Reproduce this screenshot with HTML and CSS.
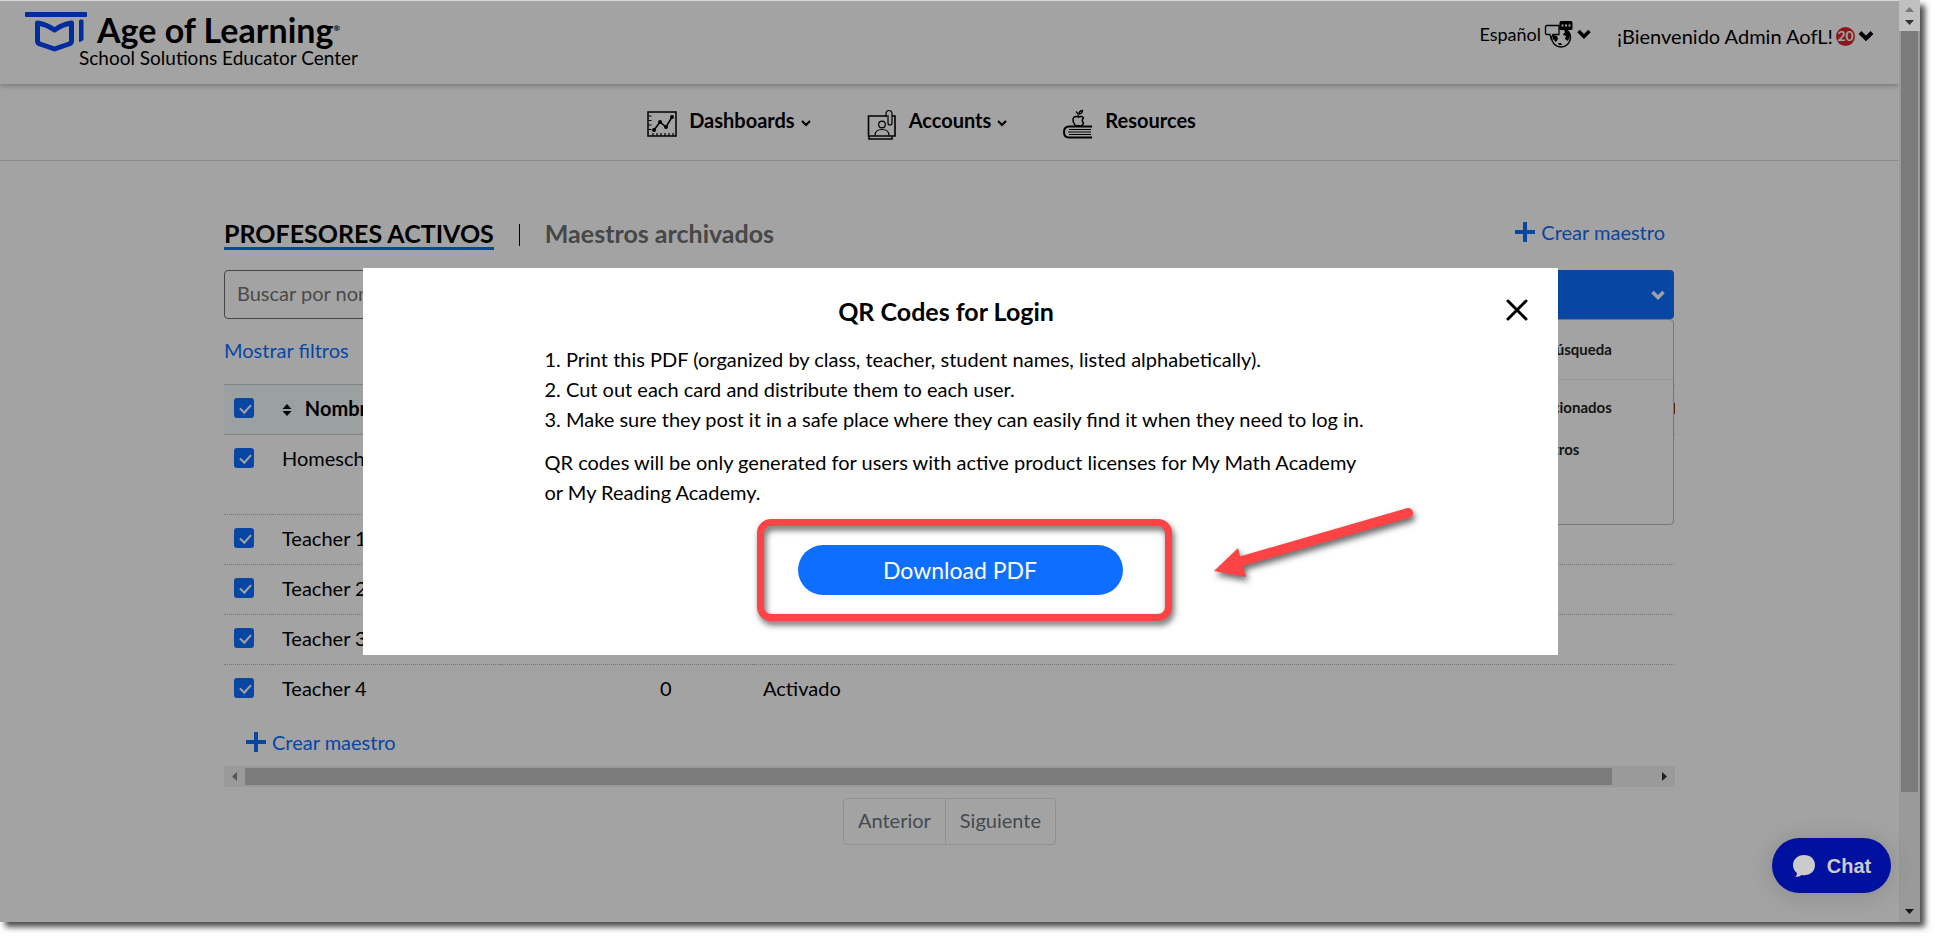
FILE: index.html
```html
<!DOCTYPE html>
<html lang="es">

<head>
  <meta charset="UTF-8">
  <meta name="viewport" content="width=device-width, initial-scale=1.0">
  <title>Age of Learning - School Solutions Educator Center</title>
  <link rel="stylesheet" href="styles.css">
</head>

<body>
  <div class="window">
    <div class="page">
      <header class="header">
        <a class="logo" href="#">
          <svg class="logo-icon" width="62" height="40" viewBox="0 0 62 40">
            <rect x="0" y="0" width="62" height="5" rx="1" fill="#0045fa" />
            <path d="M12.5 11 Q22 12.500 29.500 18 Q37 12.500 46.500 11 V29 Q46.500 31 44 32 L29.500 37 L15 32 Q12.500 31 12.500 29 Z" fill="none" stroke="#0045fa" stroke-width="5" stroke-linejoin="round" />
            <path d="M54 9 q0-1.500 1.500-1.500 h1.500 q1.500 0 1.500 1.500 V27 q0 2-4.500 3 Z" fill="#0045fa" />
          </svg>
          <span class="logo-text">
            <span class="logo-name">Age of Learning<sup>®</sup></span>
            <span class="logo-sub">School Solutions Educator Center</span>
          </span>
        </a>
        <div class="header-right">
          <button class="language">
            Español
            <svg width="30" height="28" viewBox="0 0 30 28">
              <circle cx="17" cy="17.500" r="9.500" fill="none" stroke="#000" stroke-width="1.500" />
              <path d="M9 15 l4 1 1 3 -2 3 -3-3z M20 13 l5-2 1 5 -2 5 -3-2 1-3 -3-1z M14 23 l3 0 1 2 -3 0z" fill="#000" />
              <path d="M3 5.500 h12 v9 h-6 l-2 4 -1-4 h-3 q-1.500 0-1.500-1.500 v-6 q0-1.500 1.500-1.500z" fill="#fff" stroke="#000" stroke-width="1.300" />
              <path d="M17 1 h10 q1.500 0 1.500 1.500 v6 q0 1.500-1.500 1.500 h-3 l-2 4 -2-4 h-3 q-1.500 0-1.500-1.500 v-6 q0-1.500 1.500-1.500z" fill="#000" />
              <path d="M17.500 5.500 h2 m1.500 0 h2 m1.500 0 h2" stroke="#fff" stroke-width="2" />
            </svg>
            <svg width="14" height="10" viewBox="0 0 14 10"><path d="M1.500 2 L7 7.500 L12.500 2" fill="none" stroke="#000" stroke-width="3.500" /></svg>
          </button>
          <button class="account">
            ¡Bienvenido Admin AofL!
            <span class="badge">20</span>
            <svg width="16" height="12" viewBox="0 0 16 12"><path d="M2 2.500 L8 8.500 L14 2.500" fill="none" stroke="#000" stroke-width="4" /></svg>
          </button>
        </div>
      </header>

      <nav class="nav">
        <a class="nav-item" href="#">
          <svg class="nav-icon" width="30" height="32" viewBox="0 0 30 32" fill="none" stroke="#000">
            <rect x="1" y="4" width="28" height="24" stroke-width="1.500" />
            <path d="M1.500 8h3M1.500 12.500h3M1.500 17h3M1.500 21.500h3M6 28v-3M10 28v-3M14 28v-3M18 28v-3M22 28v-3M26 28v-3" stroke-width="1.200" />
            <path d="M7 22 L13 14 L19 19 L25 9" stroke-width="1.500" />
            <g fill="#000" stroke="none"><circle cx="7" cy="22" r="2" /><circle cx="13" cy="14" r="2" /><circle cx="19" cy="19" r="2" /><circle cx="25" cy="9" r="2" /></g>
          </svg>
          Dashboards
          <svg class="caret" width="10" height="8" viewBox="0 0 10 8"><path d="M1 2 L5 6 L9 2" fill="none" stroke="#000" stroke-width="2.200" /></svg>
        </a>
        <a class="nav-item" href="#">
          <svg class="nav-icon" width="30" height="32" viewBox="0 0 30 32" fill="none" stroke="#000">
            <path d="M20 8 H1.500 V28 H28 V8 H25" stroke-width="1.600" />
            <path d="M2 28 v3 h23 v-2.500" stroke-width="1.500" />
            <circle cx="15" cy="16.500" r="3.300" stroke-width="1.200" />
            <path d="M8 27.500 q0-6 7-6 t7 6" stroke-width="1.200" />
            <path d="M19 9 V6 q0-3.500 3-3.500 t3 3.500 V15 q0 2-2 2 t-2-2 V7" stroke-width="1.200" />
          </svg>
          Accounts
          <svg class="caret" width="10" height="8" viewBox="0 0 10 8"><path d="M1 2 L5 6 L9 2" fill="none" stroke="#000" stroke-width="2.200" /></svg>
        </a>
        <a class="nav-item" href="#">
          <svg class="nav-icon" width="30" height="32" viewBox="0 0 30 32" fill="none" stroke="#000">
            <path d="M29 18.500 H6 q-5 0-5 5.500 t5 5.500 H29" stroke-width="2" />
            <path d="M6 21.500H28M5 24H28M6 26.500H28" stroke-width="1" />
            <path d="M12 17 q-2.500-3-2-6 q1-3.500 5.500-2 q4-1.500 5 1 q-2.500 2.500 0 5 q-1 3-3 3 l-2-.5 -2 .5z" stroke-width="1.500" />
            <path d="M15.500 8.500 q0-3-2.500-5 M16 6 q0-3 3.500-3.500 q0 3-3.500 3.500" stroke-width="1.300" />
          </svg>
          Resources
        </a>
      </nav>

      <main class="content">
        <div class="tabs">
          <a class="tab active" href="#">PROFESORES ACTIVOS</a>
          <span class="separator"></span>
          <a class="tab" href="#">Maestros archivados</a>
          <a class="create" href="#">
            <svg width="20" height="20" viewBox="0 0 20 20"><path d="M10 0V20M0 10H20" stroke="#0d6eff" stroke-width="4" /></svg>
            Crear maestro
          </a>
        </div>

        <div class="toolbar">
          <input class="search" type="text" aria-label="Buscar" placeholder="Buscar por nombre">
          <div class="dropdown">
            <button class="dropdown-button" aria-label="Exportar">
              <svg width="14" height="10" viewBox="0 0 14 10"><path d="M1.500 2 L7 7.500 L12.500 2" fill="none" stroke="#fff" stroke-width="3.500" /></svg>
            </button>
            <ul class="dropdown-menu">
              <li class="first"><a href="#">Exportar resultados de búsqueda</a></li>
              <li><a href="#">Exportar maestros seleccionados</a></li>
              <li><a href="#">Exportar todos los maestros</a></li>
            </ul>
          </div>
        </div>

        <a class="filters" href="#">Mostrar filtros</a>

        <div class="table-wrap">
          <table class="teachers">
            <colgroup>
              <col class="col-check">
              <col class="col-name">
              <col class="col-login">
              <col class="col-classes">
              <col class="col-status">
              <col class="col-edit">
            </colgroup>
            <thead>
              <tr>
                <th><input type="checkbox" aria-label="Seleccionar todos" checked></th>
                <th>
                  <svg class="sort" width="10" height="12" viewBox="0 0 10 12"><path d="M5 0 L9.500 5 H.5z M5 12 L9.500 7 H.5z" /></svg>
                  Nombre
                </th>
                <th></th>
                <th></th>
                <th></th>
                <th class="edit">Editar</th>
              </tr>
            </thead>
            <tbody>
              <tr class="tall">
                <td><input type="checkbox" aria-label="Homeschool" checked></td>
                <td>Homeschool</td>
                <td></td>
                <td></td>
                <td></td>
                <td></td>
              </tr>
              <tr>
                <td><input type="checkbox" aria-label="Teacher 1" checked></td>
                <td>Teacher 1</td>
                <td></td>
                <td></td>
                <td></td>
                <td></td>
              </tr>
              <tr>
                <td><input type="checkbox" aria-label="Teacher 2" checked></td>
                <td>Teacher 2</td>
                <td></td>
                <td></td>
                <td></td>
                <td></td>
              </tr>
              <tr>
                <td><input type="checkbox" aria-label="Teacher 3" checked></td>
                <td>Teacher 3</td>
                <td></td>
                <td></td>
                <td></td>
                <td></td>
              </tr>
              <tr>
                <td><input type="checkbox" aria-label="Teacher 4" checked></td>
                <td>Teacher 4</td>
                <td></td>
                <td>0</td>
                <td>Activado</td>
                <td></td>
              </tr>
            </tbody>
          </table>
          <a class="create" href="#">
            <svg width="20" height="20" viewBox="0 0 20 20"><path d="M10 0V20M0 10H20" stroke="#0d6eff" stroke-width="4" /></svg>
            Crear maestro
          </a>
        </div>
        <div class="scroll-x">
          <svg width="21" height="21" viewBox="0 0 21 21"><path d="M13 6v9l-5-4.500z" fill="#888" /></svg>
          <div class="scroll-x-track"><div class="scroll-x-thumb"></div></div>
          <svg width="21" height="21" viewBox="0 0 21 21"><path d="M8 6v9l5-4.500z" fill="#333" /></svg>
        </div>

        <div class="pager">
          <button>Anterior</button>
          <button>Siguiente</button>
        </div>
      </main>
    </div>

    <div class="scroll-y">
      <svg width="21" height="31" viewBox="0 0 21 31"><path d="M6 12h9l-4.500-5z" fill="#777" /><path d="M6 20h9l-4.500 5z" fill="#333" /></svg>
      <div class="scroll-y-track"><div class="scroll-y-thumb"></div></div>
      <svg width="21" height="21" viewBox="0 0 21 21"><path d="M6 8h9l-4.500 5z" fill="#222" /></svg>
    </div>

    <div class="overlay">
      <div class="modal" role="dialog" aria-labelledby="modal-title">
        <button class="close" aria-label="Cerrar">
          <svg width="22" height="22" viewBox="0 0 22 22"><path d="M2 2 L20 20 M20 2 L2 20" stroke="#000" stroke-width="3" stroke-linecap="round" /></svg>
        </button>
        <h2 id="modal-title">QR Codes for Login</h2>
        <div class="modal-text">
          <ol>
            <li>Print this PDF (organized by class, teacher, student names, listed alphabetically).</li>
            <li>Cut out each card and distribute them to each user.</li>
            <li>Make sure they post it in a safe place where they can easily find it when they need to log in.</li>
          </ol>
          <p>QR codes will be only generated for users with active product licenses for My Math Academy or My Reading Academy.</p>
        </div>
        <div class="download-wrap">
          <button class="download">Download PDF</button>
          <span class="highlight"></span>
          <svg class="arrow" width="210" height="90" viewBox="0 0 210 90">
            <path d="M194 13 L28 61" stroke="#fe4344" stroke-width="10" stroke-linecap="round" />
            <path d="M0 71 L24 48 L32 77 Z" fill="#fe4344" />
          </svg>
        </div>
      </div>
    </div>

    <button class="chat">
      <svg width="24" height="24" viewBox="0 0 24 24"><path d="M12 1 C5.500 1 1 5.500 1 11 c0 3.500 1.500 6 4 8 q0 2.500-1.500 4 q4 0 6-2 q1 .3 2.500 .3 C18.500 21.300 23 17 23 11 S18.500 1 12 1z" fill="#cbcbcb" /></svg>
      Chat
    </button>
  </div>
</body>

</html>
```
FILE: styles.css
```css
* {
  box-sizing: border-box;
}

body {
  margin: 0;
  background: #fff;
  color: #000;
  font-family: Lato, sans-serif;
  font-size: 20px;
  line-height: 30px;
}

a {
  color: inherit;
  text-decoration: none;
}

button {
  padding: 0;
  border: 0;
  background: none;
  color: inherit;
  font: inherit;
  cursor: pointer;
}

svg {
  display: block;
  flex-shrink: 0;
}

.window {
  position: relative;
  display: flex;
  height: calc(100vh - 15px);
  margin: 0 15px 15px 0;
  box-shadow: 5px 5px 6px rgba(0, 0, 0, 0.7);
}

.page {
  flex: 1;
  min-width: 0;
  overflow: hidden;
  background: #fff;
}

/* Header */
.header {
  display: flex;
  justify-content: space-between;
  align-items: flex-start;
  height: 84px;
  padding: 12px 25px 0;
  box-shadow: 0 2px 5px rgba(0, 0, 0, 0.25);
}

.logo {
  display: flex;
}

.logo-text {
  display: flex;
  flex-direction: column;
  margin-left: -8px;
}

.logo-name {
  padding-left: 18px;
  font-size: 34px;
  font-weight: 700;
  line-height: 36px;
}

.logo-name sup {
  font-size: 8px;
  vertical-align: 12px;
  line-height: 8px;
}

.logo-sub {
  font-size: 19px;
  line-height: 20px;
}

.header-right {
  display: flex;
  gap: 26px;
  padding-top: 9px;
}

.language,
.account {
  display: flex;
  align-items: center;
  gap: 3px;
  height: 30px;
}

.language {
  height: 26px;
  font-size: 18px;
}

.badge {
  width: 19px;
  height: 19px;
  border-radius: 50%;
  background: #d92626;
  color: #fff;
  font-size: 14px;
  font-weight: 700;
  line-height: 18px;
  text-align: center;
}

/* Navigation */
.nav {
  display: flex;
  justify-content: center;
  gap: 56px;
  height: 77px;
  padding: 21px 56px 0 0;
  border-bottom: 1px solid #dcdcdc;
}

.nav-item {
  display: flex;
  height: 30px;
  font-weight: 700;
}

.nav-icon {
  margin: 3px 12px 0 0;
}

.caret {
  margin: 14px 0 0 6px;
}

/* Content */
.content {
  max-width: 1451px;
  margin: 0 auto;
  padding-top: 56px;
}

.tabs {
  display: flex;
  height: 53px;
}

.tab {
  height: 33px;
  color: #6f6f6f;
  font-size: 25px;
  font-weight: 700;
  line-height: 32px;
}

.tab.active {
  border-bottom: 3px solid #0d6eff;
  color: #000;
}

.separator {
  width: 1px;
  height: 22px;
  margin: 7px 25px 0;
  background: #000;
}

.create {
  display: flex;
  align-items: center;
  gap: 6px;
  height: 30px;
  color: #0d6eff;
}

.tabs .create {
  margin: 0 10px 0 auto;
}

.toolbar {
  display: flex;
  justify-content: space-between;
  height: 50px;
}

.search {
  width: 500px;
  height: 49px;
  padding: 0 12px 3px;
  border: 1px solid #6d6d6d;
  border-radius: 4px;
  font: inherit;
}

.search::placeholder {
  color: #757575;
}

.dropdown {
  position: relative;
  width: 300px;
  margin-right: 1px;
}

.dropdown-button {
  display: flex;
  justify-content: flex-end;
  align-items: center;
  width: 100%;
  height: 49px;
  padding-right: 9px;
  border-radius: 4px;
  background: #0d6eff;
}

.dropdown-menu {
  position: absolute;
  top: 49px;
  left: 0;
  z-index: 1;
  width: 100%;
  height: 206px;
  margin: 0;
  padding: 0;
  border: 1px solid #bbb;
  border-radius: 4px;
  background: #fff;
  color: #222;
  font-size: 15px;
  font-weight: 700;
  list-style: none;
}

.dropdown-menu li {
  padding: 12px 0 0 18px;
}

.dropdown-menu .first {
  height: 60px;
  padding-top: 14px;
  border-bottom: 1px solid #eee;
}

.filters {
  display: block;
  margin: 15px 0 19px;
  color: #0d6eff;
}

/* Table */
.table-wrap {
  overflow: hidden;
}

.teachers {
  width: 1500px;
  border-collapse: collapse;
  table-layout: fixed;
}

.col-check {
  width: 48px;
}

.col-name {
  width: 228px;
}

.col-login {
  width: 150px;
}

.col-classes {
  width: 103px;
}

.col-status {
  width: 910px;
}

.teachers th,
.teachers td {
  height: 50px;
  padding: 8px 10px;
  text-align: left;
  vertical-align: top;
}

.teachers th {
  border-top: 1px solid #ccc;
  border-bottom: 1px solid #ccc;
  background: #f3fafc;
  font-weight: 700;
}

.teachers td {
  border-bottom: 1px dotted #bbb;
}

.teachers tr:last-child td {
  border-bottom: 0;
}

.teachers .tall td {
  height: 80px;
}

.teachers .edit {
  font-size: 15px;
}

.sort {
  display: inline-block;
  margin-right: 8px;
}

input[type="checkbox"] {
  appearance: none;
  display: block;
  width: 20px;
  height: 20px;
  margin: 5px 0 0;
  border-radius: 3px;
  background: #0d6eff;
}

input[type="checkbox"]::before {
  content: "";
  display: block;
  width: 9px;
  height: 5px;
  margin: 6px 0 0 6px;
  border: solid #fff;
  border-width: 0 0 2px 2px;
  transform: rotate(-48deg);
}

.table-wrap .create {
  margin: 12px 22px 9px;
}

.scroll-x {
  display: flex;
  height: 21px;
  background: #f1f1f1;
}

.scroll-x-track {
  flex: 1;
  padding: 2px 0;
}

.scroll-x-thumb {
  width: 97%;
  height: 17px;
  background: #c1c1c1;
}

.pager {
  display: flex;
  width: max-content;
  margin: 11px auto 0;
  border: 1px solid #dee2e6;
  border-radius: 4px;
}

.pager button {
  height: 45px;
  padding: 0 14px 2px;
  color: #6c757d;
}

.pager button + button {
  border-left: 1px solid #dee2e6;
}

/* Window scrollbar */
.scroll-y {
  display: flex;
  flex-direction: column;
  width: 21px;
  background: #f1f1f1;
}

.scroll-y svg:first-child {
  position: relative;
  z-index: 3;
  background: #c0c0c0;
}

.scroll-y-track {
  flex: 1;
  padding: 0 2px;
}

.scroll-y-thumb {
  height: 87.5%;
  background: #c1c1c1;
}

/* Modal */
.overlay {
  position: absolute;
  inset: 0;
  z-index: 2;
  padding-top: 267px;
  border-top: 1px solid #d8d8d8;
  background: rgba(0, 0, 0, 0.36);
}

.modal {
  position: relative;
  width: 90%;
  max-width: 1195px;
  height: 387px;
  margin: 0 auto;
  padding: 28px 182px 0;
  background: #fff;
}

.close {
  position: absolute;
  top: 31px;
  right: 30px;
}

.modal h2 {
  margin: 0 28px 18px 0;
  font-size: 25px;
  line-height: 30px;
  text-align: center;
}

.modal-text ol {
  margin: 0 0 13px;
  padding: 0;
  list-style-position: inside;
}

.modal-text p {
  margin: 0;
  padding-right: 16px;
}

.download-wrap {
  position: relative;
  width: 325px;
  margin: 38px auto 0;
}

.download {
  display: block;
  width: 100%;
  height: 50px;
  border-radius: 25px;
  background: #0d6eff;
  color: #fff;
  font-size: 23px;
}

.highlight {
  position: absolute;
  inset: -26px -49px -26px -41px;
  border: 7px solid #fe4344;
  border-radius: 14px;
  filter: drop-shadow(2px 4px 3px rgba(0, 0, 0, 0.6));
  pointer-events: none;
}

.arrow {
  position: absolute;
  top: -45px;
  left: 416px;
  fill: none;
  filter: drop-shadow(2px 4px 3px rgba(0, 0, 0, 0.6));
}

.chat {
  position: absolute;
  right: 29px;
  bottom: 29px;
  z-index: 3;
  display: flex;
  justify-content: center;
  align-items: center;
  gap: 11px;
  width: 119px;
  height: 55px;
  border-radius: 28px;
  background: #00109f;
  box-shadow: 0 2px 24px rgba(0, 0, 0, 0.15);
  color: #cbcbcb;
  font-family: "Liberation Sans", sans-serif;
  font-weight: 700;
}
```
